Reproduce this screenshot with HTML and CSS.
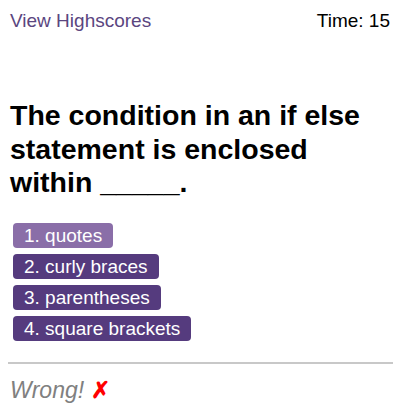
FILE: index.html
```html
<!DOCTYPE html>
<html>
<head>
<meta charset="utf-8">
<link rel="stylesheet" href="styles.css">
</head>
<body>
<header class="top">
  <a class="hs" href="#">View Highscores</a>
  <span class="time">Time: 15</span>
</header>
<main class="quiz">
  <h1 class="question">The condition in an if else statement is enclosed within _____.</h1>
  <div class="answers">
    <button class="ans ans-hover">1. quotes</button>
    <button class="ans">2. curly braces</button>
    <button class="ans">3. parentheses</button>
    <button class="ans">4. square brackets</button>
  </div>
  <hr class="sep">
  <p class="result">Wrong! <span class="cross">✗</span></p>
</main>
</body>
</html>
```
FILE: styles.css
```css
body {
  margin: 8px;
  font-family: "Liberation Sans", Arial, sans-serif;
}
.top {
  display: flex;
  justify-content: space-between;
  padding: 2px 3px 0 2px;
  font-size: 19px;
  line-height: 22px;
}
.hs {
  color: #5b467f;
  text-decoration: none;
}
.time {
  color: #000;
}
.quiz {
  padding: 0 2px;
}
.question {
  font-size: 28.5px;
  line-height: 33.5px;
  font-weight: bold;
  margin: 67px 0 23px;
}
.answers {
  display: flex;
  flex-direction: column;
  align-items: flex-start;
  gap: 6px;
  padding-left: 3px;
}
.ans {
  font-family: "Liberation Sans", Arial, sans-serif;
  font-size: 19px;
  line-height: 25px;
  height: 25px;
  padding: 0 11px;
  border: none;
  border-radius: 4px;
  background: #553b7e;
  color: #fff;
}
.ans-hover {
  background: #8a6ea8;
}
.sep {
  border: none;
  border-top: 2px solid #c8c8c8;
  margin: 21px -2px 0;
}
.result {
  margin: 13px 0 0;
  font-size: 23px;
  font-style: italic;
  color: #808080;
}
.cross {
  color: #f00;
  font-style: normal;
  font-weight: bold;
}
```
